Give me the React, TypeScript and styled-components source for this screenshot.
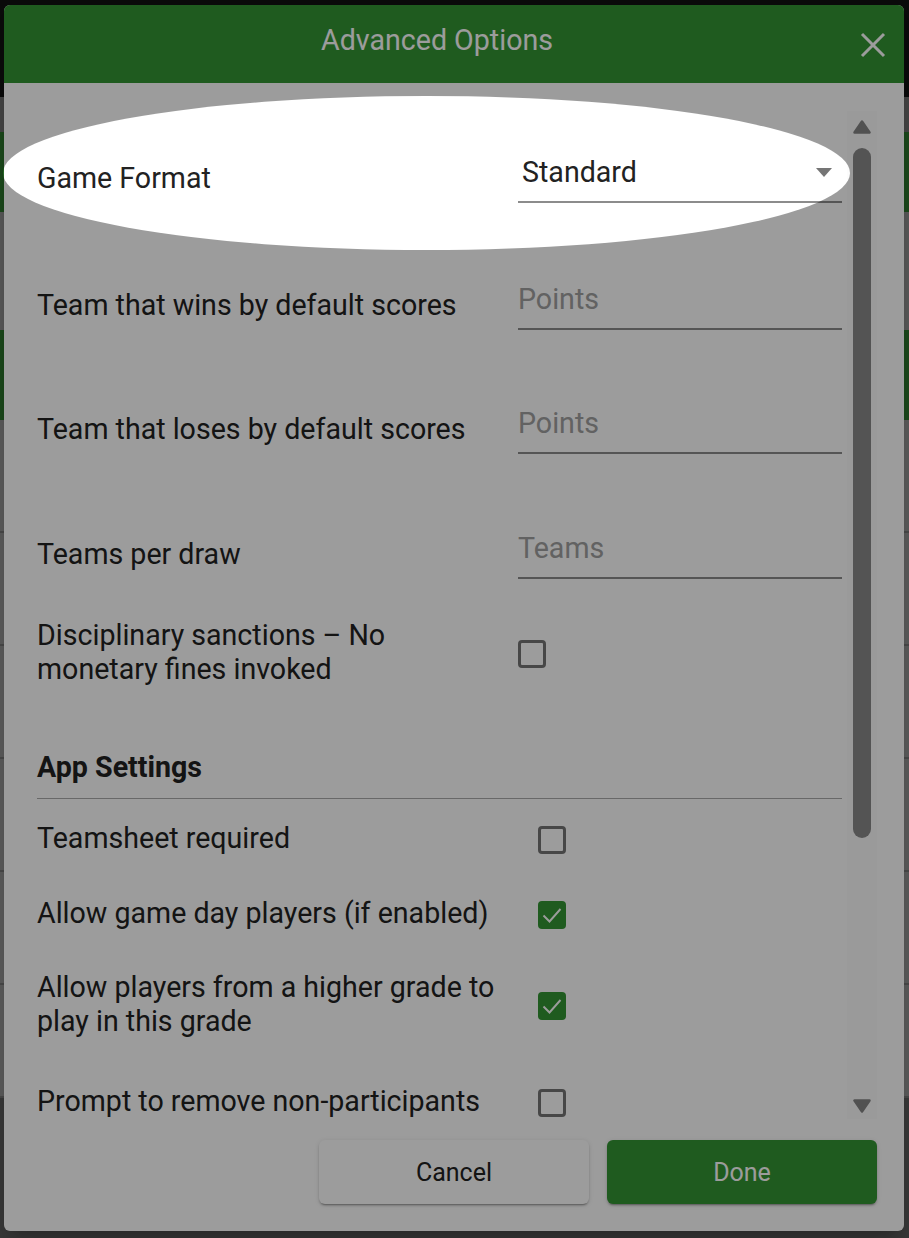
import React from "react";
import styled, { createGlobalStyle } from "styled-components";

const GREEN = "#339633";

const GlobalStyle = createGlobalStyle`
  html, body {
    margin: 0;
    padding: 0;
    background: #121212;
  }
  * {
    box-sizing: border-box;
  }
  body {
    font-family: Roboto, "Liberation Sans", Arial, sans-serif;
  }
`;

const Screen = styled.div`
  position: relative;
  width: 909px;
  height: 1238px;
  overflow: hidden;
`;

/* page that sits behind the dialog */
const BackPage = styled.div`
  display: flex;
  flex-direction: column;
  height: 100%;
`;

const Band = styled.div<{ $h: number; $bg: string }>`
  height: ${(p) => p.$h}px;
  flex-shrink: 0;
  background: ${(p) => p.$bg};
`;

const ListRow = styled.div`
  height: 113px;
  flex-shrink: 0;
  background: #999;
  border-bottom: 2px solid #7a7a7a;
`;

const Dialog = styled.div`
  position: absolute;
  left: 4px;
  top: 5px;
  width: 900px;
  height: 1226px;
  display: flex;
  flex-direction: column;
  background: #fff;
  border-radius: 6px;
  overflow: hidden;
  box-shadow: 0 11px 15px -7px rgba(0, 0, 0, 0.2),
    0 24px 38px 3px rgba(0, 0, 0, 0.14);
`;

const Header = styled.div`
  height: 78px;
  flex-shrink: 0;
  display: grid;
  grid-template-columns: 1fr auto;
  align-items: center;
  padding-right: 18px;
  background: ${GREEN};
`;

const Title = styled.div`
  padding: 0 0 8px 10px;
  text-align: center;
  color: #fff;
  font-size: 28.6px;
  line-height: 34px;
`;

const CloseButton = styled.div`
  display: flex;
  width: 26px;
  height: 26px;
  margin-top: 2px;
`;

const Body = styled.div`
  flex: 1;
  min-height: 0;
  display: flex;
`;

const ScrollArea = styled.div`
  flex: 1;
  overflow: hidden;
  padding: 70px 5px 0 33px;
  display: flex;
  flex-direction: column;
`;

const Rail = styled.div`
  width: 30px;
  margin: 28px 27px 2px 0;
  display: flex;
  flex-direction: column;
  align-items: center;
  background: #fcfcfc;
`;

const Thumb = styled.div`
  width: 18px;
  height: 690px;
  margin-top: 14px;
  border-radius: 9px;
  background: #8a8a8a;
`;

const RailSpacer = styled.div`
  flex: 1;
`;

const Arrow = styled.svg<{ $mt?: number; $mb?: number }>`
  display: block;
  margin-top: ${(p) => p.$mt ?? 0}px;
  margin-bottom: ${(p) => p.$mb ?? 0}px;
`;

const Row = styled.div<{ $mt: number }>`
  display: grid;
  grid-template-columns: 463px 324px;
  column-gap: 18px;
  align-items: center;
  margin-top: ${(p) => p.$mt}px;
`;

const Label = styled.div`
  color: #222;
  font-size: 28.6px;
  line-height: 34px;
`;

const Field = styled.div<{ $placeholder?: boolean }>`
  position: relative;
  height: 50px;
  padding: 3px 0 13px ${(p) => (p.$placeholder ? 0 : 4)}px;
  border-bottom: 2px solid #8c8c8c;
  color: ${(p) => (p.$placeholder ? "#a0a0a0" : "#222")};
  font-size: 28.6px;
  line-height: 32px;
`;

const SelectArrow = styled.svg`
  position: absolute;
  right: 10px;
  top: 15px;
`;

const Box = styled.div<{ $checked?: boolean; $indent?: number }>`
  width: 28px;
  height: 28px;
  margin-top: 4px;
  margin-left: ${(p) => p.$indent ?? 0}px;
  border-radius: 4px;
  border: ${(p) => (p.$checked ? "none" : "3px solid #757575")};
  background: ${(p) => (p.$checked ? GREEN : "transparent")};
  display: flex;
  align-items: center;
  justify-content: center;
`;

const SectionTitle = styled.div<{ $mt: number }>`
  margin-top: ${(p) => p.$mt}px;
  color: #222;
  font-size: 28.6px;
  line-height: 34px;
  font-weight: 700;
`;

const Divider = styled.div`
  margin-top: 14px;
  height: 1px;
  width: 805px;
  background: #aaa;
`;

const Footer = styled.div`
  flex-shrink: 0;
  display: flex;
  justify-content: flex-end;
  gap: 18px;
  padding: 19px 27px 27px;
`;

const Button = styled.button<{ $primary?: boolean }>`
  width: 270px;
  height: 64px;
  border: none;
  border-radius: 6px;
  font-family: Roboto, "Liberation Sans", Arial, sans-serif;
  font-size: 25px;
  color: ${(p) => (p.$primary ? "#fff" : "#222")};
  background: ${(p) => (p.$primary ? GREEN : "#fff")};
  box-shadow: 0 3px 1px -2px rgba(0, 0, 0, 0.2), 0 2px 2px 0 rgba(0, 0, 0, 0.14),
    0 1px 5px 0 rgba(0, 0, 0, 0.12);
`;

/* coach-mark spotlight: everything outside the ellipse is dimmed */
const Spotlight = styled.div`
  position: absolute;
  left: 3px;
  top: 96px;
  width: 847px;
  height: 154px;
  border-radius: 50%;
  box-shadow: 0 0 0 3000px rgba(0, 0, 0, 0.39);
  pointer-events: none;
`;

const Check = ({ checked, indent }: { checked?: boolean; indent?: number }) => (
  <Box $checked={checked} $indent={indent}>
    {checked ? (
      <svg width="24" height="24" viewBox="0 0 24 24">
        <path
          d="M3.5 12.5 L9.5 18.5 L20.5 6"
          fill="none"
          stroke="#fff"
          strokeWidth="1.9"
        />
      </svg>
    ) : null}
  </Box>
);

const TEXT_FIELDS = [
  { label: "Team that wins by default scores", placeholder: "Points", mt: 77 },
  { label: "Team that loses by default scores", placeholder: "Points", mt: 74 },
  { label: "Teams per draw", placeholder: "Teams", mt: 75 },
];

const APP_SETTINGS = [
  { label: "Teamsheet required", checked: false, mt: 22 },
  { label: "Allow game day players (if enabled)", checked: true, mt: 41 },
  {
    label: "Allow players from a higher grade to play in this grade",
    checked: true,
    mt: 40,
  },
  { label: "Prompt to remove non-participants", checked: false, mt: 46 },
];

export default function App() {
  return (
    <>
      <GlobalStyle />
      <Screen>
        <BackPage>
          <Band $h={97} $bg="#121212" />
          <Band $h={35} $bg="#737373" />
          <Band $h={80} $bg="#2e7a2e" />
          <Band $h={118} $bg="#959595" />
          <Band $h={90} $bg="#2e7a2e" />
          {Array.from({ length: 6 }).map((_, i) => (
            <ListRow key={i} />
          ))}
          <Band $h={200} $bg="#5f5f5f" />
        </BackPage>

        <Dialog>
          <Header>
            <Title>Advanced Options</Title>
            <CloseButton>
              <svg width="26" height="26" viewBox="0 0 26 26">
                <path
                  d="M2 2 L24 24 M24 2 L2 24"
                  stroke="#fff"
                  strokeWidth="3"
                  fill="none"
                />
              </svg>
            </CloseButton>
          </Header>

          <Body>
            <ScrollArea>
              <Row $mt={0}>
                <Label>Game Format</Label>
                <Field>
                  Standard
                  <SelectArrow width="16" height="9" viewBox="0 0 16 9">
                    <path d="M0 0 L16 0 L8 9 Z" fill="#757575" />
                  </SelectArrow>
                </Field>
              </Row>

              {TEXT_FIELDS.map((f) => (
                <Row $mt={f.mt} key={f.label}>
                  <Label>{f.label}</Label>
                  <Field $placeholder>{f.placeholder}</Field>
                </Row>
              ))}

              <Row $mt={39}>
                <Label>Disciplinary sanctions – No monetary fines invoked</Label>
                <Check />
              </Row>

              <SectionTitle $mt={64}>App Settings</SectionTitle>
              <Divider />

              {APP_SETTINGS.map((s) => (
                <Row $mt={s.mt} key={s.label}>
                  <Label>{s.label}</Label>
                  <Check checked={s.checked} indent={20} />
                </Row>
              ))}
            </ScrollArea>

            <Rail>
              <Arrow width="18" height="14" viewBox="0 0 18 14" $mt={9}>
                <path
                  d="M9 1.5 L16.5 12.5 L1.5 12.5 Z"
                  fill="#858585"
                  stroke="#858585"
                  strokeWidth="2.5"
                  strokeLinejoin="round"
                />
              </Arrow>
              <Thumb />
              <RailSpacer />
              <Arrow width="18" height="14" viewBox="0 0 18 14" $mb={6}>
                <path
                  d="M1.5 1.5 L16.5 1.5 L9 12.5 Z"
                  fill="#858585"
                  stroke="#858585"
                  strokeWidth="2.5"
                  strokeLinejoin="round"
                />
              </Arrow>
            </Rail>
          </Body>

          <Footer>
            <Button>Cancel</Button>
            <Button $primary>Done</Button>
          </Footer>
        </Dialog>

        <Spotlight />
      </Screen>
    </>
  );
}
